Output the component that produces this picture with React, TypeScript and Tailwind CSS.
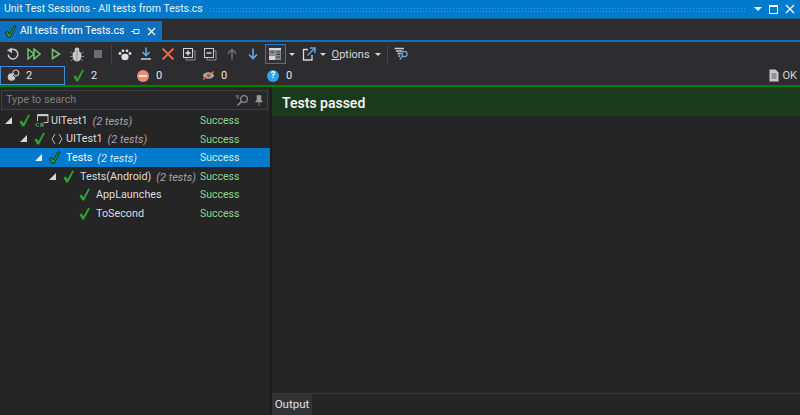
const font = "font-['Roboto','Noto_Sans',sans-serif]";

function Check({ size = 14, outlined = false }: { size?: number; outlined?: boolean }) {
  return (
    <svg width={size} height={size} viewBox="0 0 14 14" className="shrink-0">
      <path
        d="M1.5 8 L4.2 7 L5.8 10 L11 0.8 L13 1.2 L6.6 13.4 L4.6 13.4 Z"
        fill="#2f9e34"
        stroke={outlined ? "#10301a" : "none"}
        strokeWidth={outlined ? 1 : 0}
      />
    </svg>
  );
}

function Triangle({ light = false }: { light?: boolean }) {
  return (
    <svg width="7" height="7" viewBox="0 0 7 7" className="shrink-0">
      <path d="M7 0 V7 H0 Z" fill={light ? "#f1f1f1" : "#d8d8d8"} />
    </svg>
  );
}

function ProjectIcon() {
  return (
    <svg width="14" height="15" viewBox="0 0 14 15" className="shrink-0">
      <path d="M2.5 8 V1.5 H13 V9.5 H9" fill="none" stroke="#c8c8c8" strokeWidth="1" />
      <path d="M2.5 1.5 H13 V3.2 H2.5 Z" fill="#c8c8c8" />
      <path d="M3.6 10.4 A1.7 1.7 0 1 0 3.6 13.2" fill="none" stroke="#59b36a" strokeWidth="1" />
      <path d="M4.8 10.8 H9 M4.8 12.6 H9 M6 9.6 V14 M7.8 9.6 V14" stroke="#59b36a" strokeWidth="0.7" />
    </svg>
  );
}

function NamespaceIcon() {
  return (
    <svg width="14" height="14" viewBox="0 0 14 14" className="shrink-0">
      <path d="M5 2 L2 7 L5 12 M9 2 L12 7 L9 12" fill="none" stroke="#b8b8b8" strokeWidth="1" />
    </svg>
  );
}

function Tool({ children, className = "w-[21.3px]" }: { children: React.ReactNode; className?: string }) {
  return <div className={`flex h-[20px] shrink-0 items-center justify-center ${className}`}>{children}</div>;
}

function Caret({ className = "" }: { className?: string }) {
  return <div className={`h-0 w-0 shrink-0 border-x-[3px] border-t-[3px] border-x-transparent border-t-[#d6d6d6] ${className}`} />;
}

function Toolbar() {
  return (
    <div className="flex h-[22px] items-center bg-[#2d2d30] pl-[2.5px] pt-[2px]">
      <Tool>
        <svg width="14" height="14" viewBox="0 0 14 14">
          <path d="M5.5 2.6 A4.8 4.8 0 1 1 2.2 7.5" fill="none" stroke="#c8c8c8" strokeWidth="1.5" />
          <path d="M1 3.2 L6 0.6 V6.2 Z" fill="#c8c8c8" />
        </svg>
      </Tool>
      <Tool>
        <svg width="14" height="12" viewBox="0 0 14 12">
          <path d="M1 1 L7 6 L1 11 Z M7 1 L13 6 L7 11 Z" fill="none" stroke="#6cc06f" strokeWidth="1.5" />
        </svg>
      </Tool>
      <Tool>
        <svg width="10" height="12" viewBox="0 0 10 12">
          <path d="M1.5 1.5 L8.5 6 L1.5 10.5 Z" fill="none" stroke="#6cc06f" strokeWidth="1.6" />
        </svg>
      </Tool>
      <Tool>
        <svg width="14" height="15" viewBox="0 0 14 15">
          <ellipse cx="7" cy="9" rx="4.5" ry="5.5" fill="#c8c8c8" />
          <circle cx="7" cy="3" r="2.4" fill="#c8c8c8" />
          <path d="M7 3 V14.5 M0.5 5 L3 6.5 M13.5 5 L11 6.5 M0 9.5 H3 M14 9.5 H11 M1 14 L3.4 11.6 M13 14 L10.6 11.6" stroke="#8c8c8c" strokeWidth="0.9" />
        </svg>
      </Tool>
      <Tool>
        <div className="h-[8px] w-[8px] bg-[#6e6e6e]" />
      </Tool>
      <div className="ml-[2.5px] mr-[2px] h-[18px] w-px bg-[#46464a]" />
      <Tool>
        <svg width="14" height="13" viewBox="0 0 14 13">
          <ellipse cx="7" cy="9" rx="3.6" ry="3.2" fill="#dedede" />
          <circle cx="2" cy="5.5" r="1.4" fill="#dedede" />
          <circle cx="5" cy="2.8" r="1.4" fill="#dedede" />
          <circle cx="9" cy="2.8" r="1.4" fill="#dedede" />
          <circle cx="12" cy="5.5" r="1.4" fill="#dedede" />
        </svg>
      </Tool>
      <Tool>
        <svg width="12" height="14" viewBox="0 0 12 14">
          <path d="M6 0.5 V8 M2.5 5 L6 8.5 L9.5 5" fill="none" stroke="#5ea9ea" strokeWidth="1.6" />
          <path d="M1 12 H11" stroke="#dcdcdc" strokeWidth="1.4" />
        </svg>
      </Tool>
      <Tool>
        <svg width="14" height="14" viewBox="0 0 14 14">
          <path d="M1.5 1.5 L12.5 12.5 M12.5 1.5 L1.5 12.5" stroke="#e8694a" strokeWidth="1.8" />
        </svg>
      </Tool>
      <Tool>
        <svg width="14" height="14" viewBox="0 0 14 14">
          <path d="M4 11 V13 H13 V4 H11" fill="none" stroke="#8c8c8c" />
          <rect x="1.5" y="1.5" width="9" height="9" fill="none" stroke="#d4d4d4" />
          <path d="M3.5 6 H8.5 M6 3.5 V8.5" stroke="#e6e6e6" strokeWidth="1.3" />
        </svg>
      </Tool>
      <Tool>
        <svg width="14" height="14" viewBox="0 0 14 14">
          <path d="M4 11 V13 H13 V4 H11" fill="none" stroke="#8c8c8c" />
          <rect x="1.5" y="1.5" width="9" height="9" fill="none" stroke="#c8c8c8" />
          <path d="M3.5 6 H8.5" stroke="#e6e6e6" strokeWidth="1.3" />
        </svg>
      </Tool>
      <Tool>
        <svg width="10" height="12" viewBox="0 0 10 12">
          <path d="M5 11.5 V1.5 M1 5.5 L5 1.5 L9 5.5" fill="none" stroke="#6f6f6f" strokeWidth="1.6" />
        </svg>
      </Tool>
      <Tool>
        <svg width="10" height="12" viewBox="0 0 10 12">
          <path d="M5 0.5 V10.5 M1 6.5 L5 10.5 L9 6.5" fill="none" stroke="#5ea9ea" strokeWidth="1.6" />
        </svg>
      </Tool>
      <Tool className="ml-[1px] w-[21px] border border-[#3079c0] bg-[#333337]">
        <svg width="14" height="14" viewBox="0 0 14 14">
          <rect x="1" y="1" width="12" height="12" fill="#8c8c8c" />
          <rect x="1" y="1" width="12" height="2" fill="#d6d6d6" />
          <rect x="1" y="9" width="6" height="4" fill="#d6d6d6" />
          <path d="M8.5 5 H12 M8.5 7.5 H12 M8.5 10 H12 M3 5 H6" stroke="#333" strokeWidth="1" />
        </svg>
      </Tool>
      <Caret className="ml-[3px]" />
      <Tool className="ml-[5px] w-[18px]">
        <svg width="14" height="14" viewBox="0 0 14 14">
          <path d="M6 2.5 H1.5 V13 H10 V8" fill="none" stroke="#d8d8d8" strokeWidth="1.3" />
          <path d="M5.5 8.5 L12 2 M8 1 H13 V6" fill="none" stroke="#5ea9ea" strokeWidth="1.4" />
        </svg>
      </Tool>
      <Caret className="ml-[2px]" />
      <span className="ml-[6px] text-[11px] leading-none text-[#d6d6d6]">
        <span className="underline">O</span>ptions
      </span>
      <Caret className="ml-[5px]" />
      <div className="ml-[6px] h-[18px] w-px bg-[#46464a]" />
      <Tool className="ml-[3px] w-[21px]">
        <svg width="15" height="14" viewBox="0 0 15 14">
          <path d="M0.5 1.5 H10 M2 4 H8.5 M3.5 6.5 H7 M4.5 9 H6" stroke="#c8c8c8" strokeWidth="1.4" />
          <circle cx="10.5" cy="7" r="2.6" fill="none" stroke="#5ea9ea" strokeWidth="1.2" />
          <path d="M8.6 9 L5.8 12.5" stroke="#5ea9ea" strokeWidth="1.4" />
        </svg>
      </Tool>
    </div>
  );
}

function Stat({ width, icon, value, boxed = false }: { width: string; icon: React.ReactNode; value: string; boxed?: boolean }) {
  return (
    <div className={`flex h-[19px] shrink-0 items-center ${width} ${boxed ? "border border-[#3b8fd8] pl-[6px]" : "pl-[7px]"}`}>
      <div className="flex w-[18px] shrink-0 items-center">{icon}</div>
      <span className="ml-[1px] text-[11px] leading-none text-[#e6e6e6]">{value}</span>
    </div>
  );
}

function StatsRow() {
  return (
    <div className="flex h-[21px] items-end bg-[#2d2d30]">
      <Stat
        boxed
        width="w-[65px]"
        value="2"
        icon={
          <svg width="13" height="13" viewBox="0 0 13 13">
            <circle cx="4.5" cy="8" r="3.8" fill="#c8c8c8" />
            <circle cx="8.8" cy="4" r="3" fill="none" stroke="#c8c8c8" strokeWidth="1.2" />
            <path d="M6 6 L8 8" stroke="#2d2d30" strokeWidth="1" />
          </svg>
        }
      />
      <Stat width="w-[65px]" value="2" icon={<Check size={13} />} />
      <Stat
        width="w-[65px]"
        value="0"
        icon={
          <div className="flex h-[12px] w-[12px] items-center justify-center rounded-full bg-[#ef8a6f]">
            <div className="h-[2px] w-[8px] bg-[#f5e9e4]" />
          </div>
        }
      />
      <Stat
        width="w-[65px]"
        value="0"
        icon={
          <svg width="13" height="11" viewBox="0 0 13 11">
            <ellipse cx="6.5" cy="5.5" rx="5.5" ry="3.2" fill="#a8a8a8" />
            <circle cx="6.5" cy="5.5" r="1.6" fill="#2d2d30" />
            <path d="M1 9.5 L12 1.5" stroke="#e8694a" strokeWidth="1.2" />
          </svg>
        }
      />
      <Stat
        width="w-[65px]"
        value="0"
        icon={
          <div className="flex h-[12px] w-[12px] items-center justify-center rounded-full bg-[#2fa3e6] text-[9px] font-bold leading-none text-white">
            ?
          </div>
        }
      />
      <div className="ml-auto flex h-[19px] items-center pr-[3px]">
        <svg width="10" height="13" viewBox="0 0 10 13">
          <path d="M0.5 0.5 H6.5 L9.5 3.5 V12.5 H0.5 Z" fill="#c8c8c8" />
          <path d="M2.5 5 H7.5 M2.5 7 H7.5 M2.5 9 H7.5" stroke="#5c5c5c" />
        </svg>
        <span className="ml-[4px] text-[11px] leading-none text-[#d6d6d6]">OK</span>
      </div>
    </div>
  );
}

const rows = [
  { name: "UITest1", count: "(2 tests)", indent: "pl-[5px]", icon: <ProjectIcon /> },
  { name: "UITest1", count: "(2 tests)", indent: "pl-[20px]", icon: <NamespaceIcon /> },
  { name: "Tests", count: "(2 tests)", indent: "pl-[35px]", selected: true },
  { name: "Tests(Android)", count: "(2 tests)", indent: "pl-[49px]" },
  { name: "AppLaunches", indent: "pl-[64px]", leaf: true },
  { name: "ToSecond", indent: "pl-[64px]", leaf: true },
];

function TreeRow({ row }: { row: (typeof rows)[number] }) {
  return (
    <div className={`flex h-[18.6px] items-center ${row.selected ? "bg-[#007acc]" : ""}`}>
      <div className={`flex w-[200px] shrink-0 items-center ${row.indent}`}>
        <div className="flex w-[7px] shrink-0 justify-start">{!row.leaf && <Triangle light={row.selected} />}</div>
        <div className={row.leaf ? "ml-[7px]" : "ml-[6px]"}>
          <Check size={13} outlined={row.selected} />
        </div>
        {row.icon ? <div className="ml-[4px]">{row.icon}</div> : null}
        <span className={`mt-[2px] whitespace-nowrap text-[10.8px] leading-none ${row.selected ? "text-white" : "text-[#dcdcdc]"} ${row.icon ? "ml-[2px]" : "ml-[5px]"}`}>
          {row.name}
        </span>
        {row.count && (
          <span className={`ml-[5px] mt-[2px] whitespace-nowrap text-[11px] italic leading-none ${row.selected ? "text-[#d5e8f7]" : "text-[#a6a6a6]"}`}>
            {row.count}
          </span>
        )}
      </div>
      <span className={`mt-[2px] text-[10.5px] leading-none ${row.selected ? "text-[#d5f0d8]" : "text-[#86d98a]"}`}>Success</span>
    </div>
  );
}

export default function App() {
  return (
    <div className={`flex h-[415px] w-[800px] flex-col overflow-hidden bg-[#252526] ${font}`}>
      {/* title bar */}
      <div className="flex h-[19px] items-center border-b border-[#0d5a94] bg-[#007acc] pl-[4px] pr-[2px]">
        <span className="whitespace-nowrap text-[10.5px] leading-none text-[#e8f3fb]">Unit Test Sessions - All tests from Tests.cs</span>
        <div className="mx-[6px] h-[5px] flex-1 bg-[radial-gradient(#3f9ddb_1px,transparent_1px)] bg-[length:3px_3px]" />
        <div className="ml-[1px] h-0 w-0 border-x-[4px] border-t-[4px] border-x-transparent border-t-white" />
        <div className="ml-[7px] h-[9px] w-[9px] border border-t-2 border-white" />
        <svg width="10" height="10" viewBox="0 0 10 10" className="ml-[7px] mr-[3px]">
          <path d="M1 1 L9 9 M9 1 L1 9" stroke="white" strokeWidth="1.3" />
        </svg>
      </div>

      {/* document tabs */}
      <div className="flex h-[23px] items-end border-b-2 border-[#0e70c0] bg-[#2d2d30]">
        <div className="flex h-[19px] w-[162px] items-center bg-[#0e70c0] pl-[4px] pt-[1px]">
          <Check size={13} outlined />
          <span className="ml-[3px] whitespace-nowrap text-[10.5px] leading-none text-white">All tests from Tests.cs</span>
          <svg width="9" height="9" viewBox="0 0 9 9" className="ml-auto">
            <path d="M0 4.5 H3 M3 2 V7 M3 2.5 H8 V6.5 H3" fill="none" stroke="#e6f1fa" strokeWidth="1" />
          </svg>
          <svg width="9" height="9" viewBox="0 0 9 9" className="ml-[7px] mr-[6px]">
            <path d="M1 1 L8 8 M8 1 L1 8" stroke="white" strokeWidth="1.2" />
          </svg>
        </div>
      </div>

      <Toolbar />
      <StatsRow />
      <div className="h-[2px] bg-[#008000]" />

      <div className="flex min-h-0 flex-1">
        {/* tree */}
        <div className="w-[270px] shrink-0 bg-[#252526]">
          <div className="flex h-[24px] items-center pb-[1px] pl-[1px] pr-[2px] pt-[2px]">
            <div className="flex h-[20px] flex-1 items-center border border-[#3f3f46] bg-[#28282a] pl-[4px] pr-[4px] pt-[1px]">
              <span className="text-[10.8px] leading-none text-[#7f7f7f]">Type to search</span>
              <svg width="14" height="13" viewBox="0 0 14 13" className="ml-auto">
                <circle cx="9" cy="5" r="3.4" fill="none" stroke="#8c8c8c" strokeWidth="1.3" />
                <path d="M6.5 7.5 L2.5 11.5" stroke="#8c8c8c" strokeWidth="1.6" />
                <path d="M0.5 2 H4 M1.5 4 H4" stroke="#8c8c8c" />
              </svg>
              <svg width="8" height="11" viewBox="0 0 8 11" className="ml-[6px]">
                <path d="M2 0.5 H6 V5 L7.5 7 H0.5 L2 5 Z M4 7 V11" fill="#9a9a9a" stroke="#9a9a9a" strokeWidth="0.6" />
              </svg>
            </div>
          </div>
          {rows.map((row, i) => (
            <TreeRow key={i} row={row} />
          ))}
        </div>

        {/* splitter */}
        <div className="w-[2px] shrink-0 bg-[#1d1d1e]" />

        {/* results */}
        <div className="flex min-w-0 flex-1 flex-col bg-[#252526]">
          <div className="flex h-[29px] items-center bg-[#1a3a1c] pl-[10px] pt-[2px]">
            <span className="text-[14px] font-semibold leading-none text-[#f0f0f0]">Tests passed</span>
          </div>
          <div className="flex-1 border-b border-[#3a3a3d]" />
          <div className="flex h-[21px] bg-[#252526]">
            <div className="flex w-[40px] items-center justify-center bg-[#333337] pt-[1px]">
              <span className="text-[11.5px] leading-none text-[#e0e0e0]">Output</span>
            </div>
          </div>
        </div>
      </div>
    </div>
  );
}
